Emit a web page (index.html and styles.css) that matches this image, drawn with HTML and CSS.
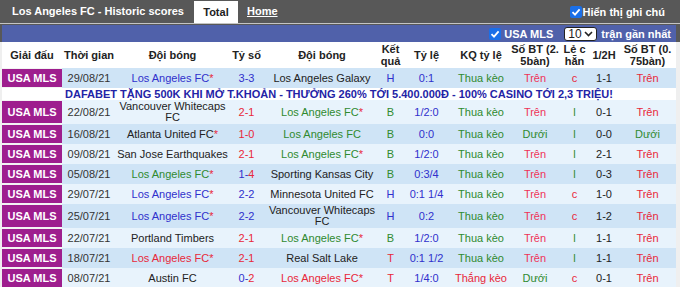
FILE: index.html
```html
<!DOCTYPE html>
<html lang="vi">

<head>
    <meta charset="UTF-8">
    <meta name="viewport" content="width=device-width, initial-scale=1.0">
    <title>Los Angeles FC - Historic scores</title>
    <link rel="stylesheet" href="styles.css">
</head>

<body>
    <div class="page">

        <div class="topbar">
            <div class="title">Los Angeles FC - Historic scores</div>
            <div class="tab tab-active">Total</div>
            <a class="tab tab-link" href="#">Home</a>
            <label class="note">
                <svg class="check" width="12" height="12" viewBox="0 0 12 12">
                    <rect width="12" height="12" rx="2" fill="#1a6fe8" />
                    <path d="M2.5 6.2 L5 8.6 L9.6 3.4" fill="none" stroke="#fff" stroke-width="1.8" />
                </svg>Hiển thị ghi chú
            </label>
        </div>

        <div class="filter-wrap">
            <div class="filter-bar">
                <label class="filter-league">
                    <svg class="check" width="12" height="12" viewBox="0 0 12 12">
                        <rect width="12" height="12" rx="2" fill="#1a6fe8" />
                        <path d="M2.5 6.2 L5 8.6 L9.6 3.4" fill="none" stroke="#fff" stroke-width="1.8" />
                    </svg>
                    USA MLS
                </label>
                <span class="select">10
                    <svg width="9" height="6" viewBox="0 0 9 6">
                        <path d="M1 1 L4.5 4.5 L8 1" fill="none" stroke="#222" stroke-width="1.6" />
                    </svg>
                </span>
                <span class="filter-text">trận gần nhất</span>
            </div>
        </div>

        <div class="table-wrap">
            <table class="scores">
                <colgroup>
                    <col style="width: 60px">
                    <col style="width: 54px">
                    <col style="width: 113px">
                    <col style="width: 35px">
                    <col style="width: 116px">
                    <col style="width: 21px">
                    <col style="width: 51px">
                    <col style="width: 58px">
                    <col style="width: 50px">
                    <col style="width: 29px">
                    <col style="width: 30px">
                    <col style="width: 57px">
                </colgroup>
                <tr class="head">
                    <th>Giải đấu</th>
                    <th>Thời gian</th>
                    <th>Đội bóng</th>
                    <th>Tỷ số</th>
                    <th>Đội bóng</th>
                    <th>Kết<br>quả</th>
                    <th>Tỷ lệ</th>
                    <th>KQ tỷ lệ</th>
                    <th>Số BT (2.<br>5bàn)</th>
                    <th>Lẻ c<br>hẵn</th>
                    <th>1/2H</th>
                    <th>Số BT (0.<br>75bàn)</th>
                </tr>

                <tr class="row-blue">
                    <td class="league">USA MLS</td>
                    <td class="date">29/08/21</td>
                    <td class="blue">Los Angeles FC<span class="star">*</span></td>
                    <td class="blue">3-3</td>
                    <td>Los Angeles Galaxy</td>
                    <td class="blue">H</td>
                    <td class="blue">0:1</td>
                    <td class="green">Thua kèo</td>
                    <td class="pink">Trên</td>
                    <td class="red">c</td>
                    <td>1-1</td>
                    <td class="red">Trên</td>
                </tr>

                <tr class="ad">
                    <td colspan="12">DAFABET TẶNG 500K KHI MỞ T.KHOẢN - THƯỞNG 260% TỚI 5.400.000Đ - 100% CASINO TỚI 2,3 TRIỆU!</td>
                </tr>

                <tr class="row-light">
                    <td class="league">USA MLS</td>
                    <td class="date">22/08/21</td>
                    <td>Vancouver Whitecaps FC</td>
                    <td class="red">2-1</td>
                    <td class="green">Los Angeles FC<span class="star">*</span></td>
                    <td class="green">B</td>
                    <td class="blue">1/2:0</td>
                    <td class="green">Thua kèo</td>
                    <td class="pink">Trên</td>
                    <td class="green">l</td>
                    <td>0-1</td>
                    <td class="red">Trên</td>
                </tr>

                <tr class="row-blue">
                    <td class="league">USA MLS</td>
                    <td class="date">16/08/21</td>
                    <td>Atlanta United FC<span class="star">*</span></td>
                    <td class="red">1-0</td>
                    <td class="green">Los Angeles FC</td>
                    <td class="green">B</td>
                    <td class="blue">0:0</td>
                    <td class="green">Thua kèo</td>
                    <td class="green">Dưới</td>
                    <td class="green">l</td>
                    <td>0-0</td>
                    <td class="green">Dưới</td>
                </tr>

                <tr class="row-light">
                    <td class="league">USA MLS</td>
                    <td class="date">09/08/21</td>
                    <td>San Jose Earthquakes</td>
                    <td class="red">2-1</td>
                    <td class="green">Los Angeles FC<span class="star">*</span></td>
                    <td class="green">B</td>
                    <td class="blue">1/2:0</td>
                    <td class="green">Thua kèo</td>
                    <td class="pink">Trên</td>
                    <td class="green">l</td>
                    <td>2-1</td>
                    <td class="red">Trên</td>
                </tr>

                <tr class="row-blue">
                    <td class="league">USA MLS</td>
                    <td class="date">05/08/21</td>
                    <td class="green">Los Angeles FC<span class="star">*</span></td>
                    <td class="blue">1-<span class="red">4</span></td>
                    <td>Sporting Kansas City</td>
                    <td class="green">B</td>
                    <td class="blue">0:3/4</td>
                    <td class="green">Thua kèo</td>
                    <td class="pink">Trên</td>
                    <td class="green">l</td>
                    <td>0-3</td>
                    <td class="red">Trên</td>
                </tr>

                <tr class="row-light">
                    <td class="league">USA MLS</td>
                    <td class="date">29/07/21</td>
                    <td class="blue">Los Angeles FC<span class="star">*</span></td>
                    <td class="blue">2-2</td>
                    <td>Minnesota United FC</td>
                    <td class="blue">H</td>
                    <td class="blue">0:1 1/4</td>
                    <td class="green">Thua kèo</td>
                    <td class="pink">Trên</td>
                    <td class="red">c</td>
                    <td>1-0</td>
                    <td class="red">Trên</td>
                </tr>

                <tr class="row-blue">
                    <td class="league">USA MLS</td>
                    <td class="date">25/07/21</td>
                    <td class="blue">Los Angeles FC<span class="star">*</span></td>
                    <td class="blue">2-2</td>
                    <td>Vancouver Whitecaps FC</td>
                    <td class="blue">H</td>
                    <td class="blue">0:2</td>
                    <td class="green">Thua kèo</td>
                    <td class="pink">Trên</td>
                    <td class="red">c</td>
                    <td>1-2</td>
                    <td class="red">Trên</td>
                </tr>

                <tr class="row-light">
                    <td class="league">USA MLS</td>
                    <td class="date">22/07/21</td>
                    <td>Portland Timbers</td>
                    <td class="red">2-1</td>
                    <td class="green">Los Angeles FC<span class="star">*</span></td>
                    <td class="green">B</td>
                    <td class="blue">1/2:0</td>
                    <td class="green">Thua kèo</td>
                    <td class="pink">Trên</td>
                    <td class="green">l</td>
                    <td>1-1</td>
                    <td class="red">Trên</td>
                </tr>

                <tr class="row-blue">
                    <td class="league">USA MLS</td>
                    <td class="date">18/07/21</td>
                    <td class="red">Los Angeles FC<span class="star">*</span></td>
                    <td class="red">2-1</td>
                    <td>Real Salt Lake</td>
                    <td class="red">T</td>
                    <td class="blue">0:1 1/2</td>
                    <td class="green">Thua kèo</td>
                    <td class="pink">Trên</td>
                    <td class="green">l</td>
                    <td>1-1</td>
                    <td class="red">Trên</td>
                </tr>

                <tr class="row-light">
                    <td class="league">USA MLS</td>
                    <td class="date">08/07/21</td>
                    <td>Austin FC</td>
                    <td class="blue">0-<span class="red">2</span></td>
                    <td class="red">Los Angeles FC<span class="star">*</span></td>
                    <td class="red">T</td>
                    <td class="blue">1/4:0</td>
                    <td class="red">Thắng kèo</td>
                    <td class="green">Dưới</td>
                    <td class="red">c</td>
                    <td>0-1</td>
                    <td class="red">Trên</td>
                </tr>
            </table>
        </div>

    </div>
</body>

</html>
```

FILE: styles.css
```css
body {
    margin: 0;
    background-color: #ffffff;
    font-family: "Liberation Sans", Arial, sans-serif;
    font-size: 11px;
    color: #222;
}

.page {
    width: 680px;
}

/* верхняя серая полоса */
.topbar {
    display: flex;
    height: 23px;
    background-color: #585858;
    border-bottom: 1px solid #c4c4c4;
    color: #fff;
    font-weight: bold;
}

.title {
    padding-left: 12px;
    line-height: 23px;
}

.tab-active {
    width: 44px;
    margin: 1px 0 0 10px;
    text-align: center;
    line-height: 22px;
    background-color: #fff;
    color: #222;
}

.tab-link {
    margin-left: 9px;
    line-height: 23px;
    color: #fff;
    text-decoration: underline;
}

.note {
    display: flex;
    align-items: center;
    gap: 1px;
    margin-left: auto;
    margin-right: 15px;
}

.check {
    display: block;
}

/* синяя полоса с фильтром */
.filter-wrap {
    padding: 1px 4px 0 2px;
    background-color: #585858;
}

.filter-bar {
    display: flex;
    justify-content: flex-end;
    align-items: center;
    height: 17px;
    padding-right: 5px;
    background-color: #5061aa;
    color: #fff;
    font-weight: bold;
}

.filter-league {
    display: flex;
    align-items: center;
    gap: 3px;
}

.select {
    display: flex;
    align-items: center;
    justify-content: space-between;
    box-sizing: border-box;
    width: 33px;
    height: 14px;
    margin: 0 4px 0 11px;
    padding: 0 3px 0 3px;
    border: 1px solid #222;
    border-radius: 3px;
    background-color: #fff;
    color: #222;
    font-size: 12px;
    font-weight: normal;
}

/* таблица */
.table-wrap {
    padding: 0 4px 0 2px;
    background-color: #efefef;
}

.scores {
    width: 674px;
    table-layout: fixed;
    border-spacing: 0;
}

.scores th {
    height: 26px;
    padding: 0;
    line-height: 12px;
    background-color: #fff;
    color: #222;
    font-weight: bold;
}

.scores td {
    height: 18px;
    padding: 0 1px;
    line-height: 11px;
    text-align: center;
    border-top: 1px solid transparent;
    border-bottom: 1px solid transparent;
    color: #222;
}

.row-blue td {
    background-color: #cfe4f6;
}

.row-light td {
    background-color: #e8f3fc;
}

.scores td.league {
    background-color: #9e1e8e;
    border-color: #f3f3f3;
    color: #fff;
    font-weight: bold;
}

.scores td.date {
    color: #333;
}

.scores .ad td {
    height: 12px;
    padding: 0;
    border: none;
    line-height: 12px;
    background-color: #fff;
    color: #2323a6;
    font-weight: bold;
}

.scores td.blue,
.blue {
    color: #3030cc;
}

.scores td.green,
.green {
    color: #2f8a2f;
}

.scores td.red,
.red {
    color: #e8283a;
}

.scores td.pink {
    color: #ef3358;
}

.star {
    color: #e8283a;
}
```
